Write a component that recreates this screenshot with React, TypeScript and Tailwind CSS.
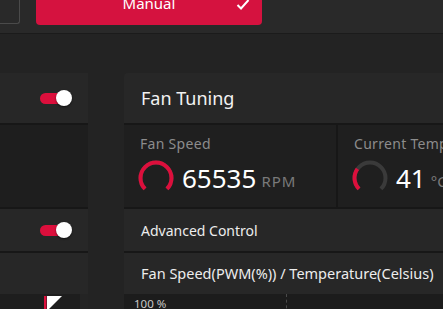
import React from "react";

function Toggle() {
  return (
    <div className="relative w-[32px] h-[16px] flex items-center">
      <div className="w-[26px] h-[11px] rounded-full bg-[#dc0f3c]" />
      <div className="absolute right-0 top-0 w-[16px] h-[16px] rounded-full bg-white shadow-[0_1px_2px_rgba(0,0,0,0.6)]" />
    </div>
  );
}

function arcPath(cx: number, cy: number, r: number, a0: number, a1: number) {
  const rad = (a: number) => (a * Math.PI) / 180;
  const x0 = cx + r * Math.cos(rad(a0));
  const y0 = cy + r * Math.sin(rad(a0));
  const x1 = cx + r * Math.cos(rad(a1));
  const y1 = cy + r * Math.sin(rad(a1));
  const large = a1 - a0 > 180 ? 1 : 0;
  return `M ${x0} ${y0} A ${r} ${r} 0 ${large} 1 ${x1} ${y1}`;
}

function Gauge({ value }: { value: number }) {
  const end = 135 + 270 * value;
  return (
    <svg width="36" height="36" viewBox="0 0 36 36">
      <path d={arcPath(18, 18, 15.5, 135, 405)} stroke="#3a3a3a" strokeWidth="4" fill="none" />
      <path d={arcPath(18, 18, 15.5, 135, end)} stroke="#dc0f3c" strokeWidth="4" fill="none" />
    </svg>
  );
}

export default function App() {
  return (
    <div className="w-[443px] h-[309px] overflow-hidden bg-[#232323] font-['Noto_Sans',sans-serif]">
      {/* top bar */}
      <div className="h-[34px] bg-[#292929] border-b border-[#1b1b1b] flex items-start">
        <div className="w-[20px] h-[24px] border-r border-b border-[#4a4a4a] rounded-br-[3px]" />
        <div className="ml-[16px] w-[226px] h-[25px] bg-[#d5123f] rounded-b-[4px] relative flex justify-center">
          <span className="text-white text-[15px] leading-[15px] -mt-[4px]">Manual</span>
          <svg className="absolute left-[200px] -top-[1px]" width="14" height="12" viewBox="0 0 14 12">
            <path d="M1.5 6 L5 9.5 L12.5 1" stroke="white" strokeWidth="2" fill="none" />
          </svg>
        </div>
      </div>

      <div className="flex pt-[39px]">
        {/* left panel */}
        <div className="w-[88px] shrink-0 flex flex-col">
          <div className="h-[50px] bg-[#272727] flex items-center justify-end pr-[16px]">
            <Toggle />
          </div>
          <div className="h-[2px] bg-[#171717]" />
          <div className="h-[82px] bg-[#1e1e1e]" />
          <div className="h-[2px] bg-[#171717]" />
          <div className="h-[42px] bg-[#272727] flex items-center justify-end pr-[16px]">
            <Toggle />
          </div>
          <div className="h-[2px] bg-[#171717]" />
          <div className="h-[41px] bg-[#272727]" />
          <div className="h-[20px] flex">
            <div className="w-[80px] bg-[#1e1e1e] pl-[44px] pt-[2px]">
              <svg width="18" height="16" viewBox="0 0 18 16">
                <rect x="0" y="0" width="2.5" height="16" fill="#dc0f3c" />
                <polygon points="3,0 18,0 3,15" fill="white" />
              </svg>
            </div>
            <div className="w-[8px] bg-[#242424]" />
          </div>
        </div>

        <div className="w-[36px] shrink-0" />

        {/* right panel */}
        <div className="w-[400px] shrink-0 flex flex-col">
          <div className="h-[50px] bg-[#272727] rounded-tl-[4px] pl-[17px] flex items-center text-[18px] text-[#f2f2f2]">
            Fan Tuning
          </div>
          <div className="h-[2px] bg-[#171717]" />
          <div className="h-[82px] flex gap-[2px] bg-[#171717]">
            <div className="w-[212px] bg-[#1f1f1f] pl-[14px] pt-[9px]">
              <div className="pl-[2px] text-[14px] leading-[20px] text-[#8c8c8c] tracking-[0.3px]">Fan Speed</div>
              <div className="mt-[6px] flex items-center">
                <Gauge value={1} />
                <span className="ml-[8px] text-[26px] leading-[30px] text-white">65535</span>
                <span className="ml-[5px] mt-[6px] text-[15px] text-[#7a7a7a] tracking-[1px]">RPM</span>
              </div>
            </div>
            <div className="flex-1 bg-[#1f1f1f] pl-[14px] pt-[9px]">
              <div className="pl-[2px] text-[14px] leading-[20px] text-[#8c8c8c] tracking-[0.3px]">Current Temperature</div>
              <div className="mt-[6px] flex items-center">
                <Gauge value={0.3} />
                <span className="ml-[8px] text-[26px] leading-[30px] text-white">41</span>
                <span className="ml-[5px] mt-[6px] text-[15px] text-[#7a7a7a]">°C</span>
              </div>
            </div>
          </div>
          <div className="h-[2px] bg-[#171717]" />
          <div className="h-[42px] bg-[#272727] pl-[17px] flex items-center text-[14px] text-[#ededed]">
            Advanced Control
          </div>
          <div className="h-[2px] bg-[#171717]" />
          <div className="h-[41px] bg-[#272727] pl-[17px] flex items-center text-[14.5px] text-[#ededed]">
            Fan Speed(PWM(%)) / Temperature(Celsius)
          </div>
          <div className="h-[20px] bg-[#1c1c1c] flex">
            <div className="w-[9px]" />
            <div className="w-[154px] border-r border-dashed border-[#4a4a4a] text-[11.5px] leading-[14px] pt-[3px] pl-[1px] text-[#c8c8c8]">
              100 %
            </div>
          </div>
        </div>
      </div>
    </div>
  );
}
